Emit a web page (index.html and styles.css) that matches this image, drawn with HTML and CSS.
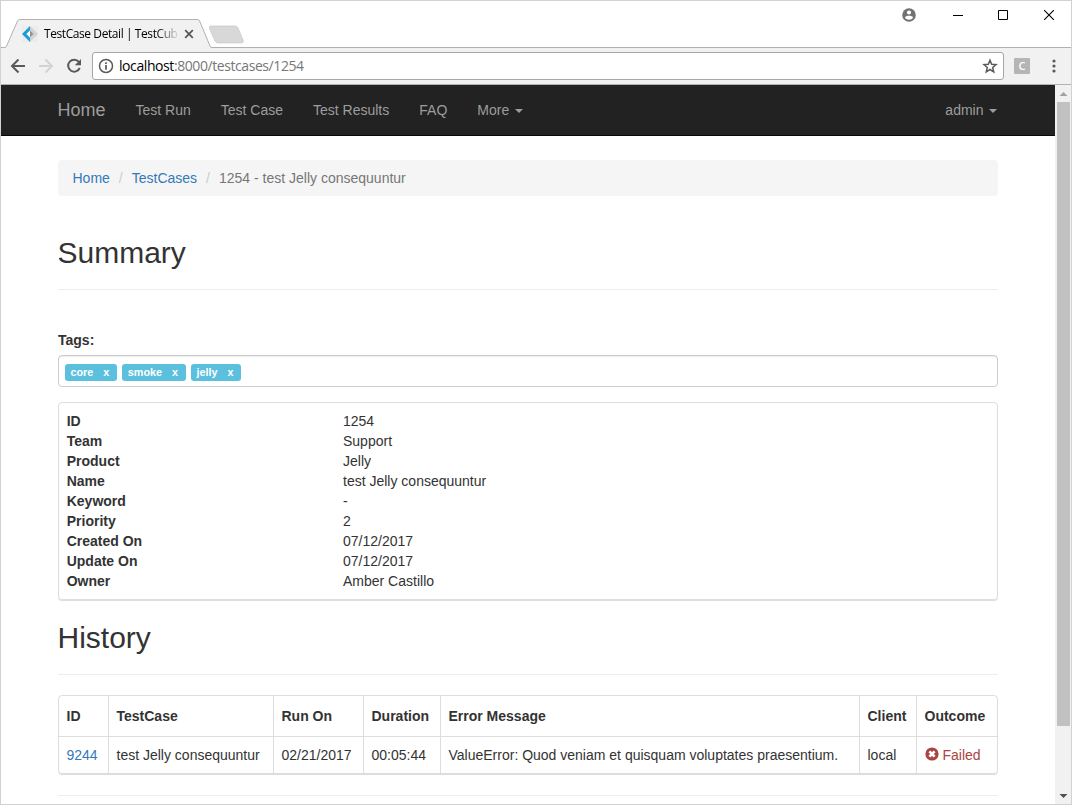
FILE: index.html
```html
<!DOCTYPE html>
<html lang="en">
<head>
<meta charset="utf-8">
<title>TestCase Detail | TestCube</title>
<link rel="stylesheet" href="styles.css">
</head>
<body>
<div class="window">
  <header class="titlebar">
    <div class="tab">
      <svg class="tab-shape" width="245" height="30" viewBox="0 0 245 30">
        <path d="M0 28.500H3.500Q5 28.500 5.600 27L16.500 2Q17.200.500 19 .500H196Q198 .500 198.600 2L209 27Q209.700 28.500 211 28.500H245V30H0Z" fill="#f1f1f1"/>
        <path d="M0 28.500H3.500Q5 28.500 5.600 27L16.500 2Q17.200.500 19 .500H196Q198 .500 198.600 2L209 27Q209.700 28.500 211 28.500H245" fill="none" stroke="#b1b1b1"/>
        <path d="M211 29V30H245V28.900Z" fill="#f1f1f1"/>
        <path d="M209.500 7H234Q236 7 237 9L242 21Q243 24 240.500 24H217Q215 24 214 22L208.500 9.500Q207.800 7 209.500 7Z" fill="#d8d8d8" stroke="#c9c9c9" stroke-width=".8"/>
        <path d="M211.500 28V24.800H245V28Z" fill="#fff"/>
      </svg>
      <div class="tab-content">
        <svg width="16" height="16" viewBox="0 0 16 16">
          <path d="M0 0H16V16H0Z" fill="#ececec"/>
          <path d="M8 0L0 8l8 8v-4.500L4.500 8 8 4.500Z" fill="#189fdb"/>
          <path d="M8 0l8 8-8 8v-4.500L11.500 8 8 4.500Z" fill="#d2d2d2"/>
          <path d="M8 4.500L11.500 8 8 11.500Z" fill="#929292"/>
          <path d="M8 4.500L4.500 8 8 11.500Z" fill="#fff"/>
        </svg>
        <span class="tab-title">TestCase Detail | TestCub</span>
        <svg width="10" height="10" viewBox="0 0 10 10"><path d="M1.200 1.200l7.600 7.600M8.800 1.200L1.200 8.800" stroke="#555" stroke-width="1.700"/></svg>
      </div>
    </div>
    <div class="controls">
      <svg width="14" height="14" viewBox="0 0 14 14"><circle cx="7" cy="7" r="6.800" fill="#727272"/><circle cx="7" cy="4.500" r="2.100" fill="#fff"/><path d="M2.900 9.500C3.500 7.300 10.500 7.300 11.100 9.500 9.500 12.400 4.500 12.400 2.900 9.500Z" fill="#fff"/></svg>
      <svg class="minimize" width="10" height="10" viewBox="0 0 10 10"><path d="M0 5.500H10" stroke="#000"/></svg>
      <svg class="maximize" width="10" height="10" viewBox="0 0 10 10"><path d="M.500.500H9.500V9.500H.500Z" fill="none" stroke="#000"/></svg>
      <svg class="close" width="10" height="10" viewBox="0 0 10 10"><path d="M0 0L10 10M10 0L0 10" stroke="#000" stroke-width="1.100"/></svg>
    </div>
  </header>

  <div class="toolbar">
    <svg width="16" height="16" viewBox="0 0 16 16"><path d="M15 8H2.500M8.500 1.500L2 8l6.500 6.500" fill="none" stroke="#5a5a5a" stroke-width="2"/></svg>
    <svg class="forward" width="16" height="16" viewBox="0 0 16 16"><path d="M1 8H13.500M7.500 1.500L14 8l-6.500 6.500" fill="none" stroke="#d3d3d3" stroke-width="2"/></svg>
    <svg class="reload" width="16" height="16" viewBox="0 0 16 16"><path d="M12.900 4A6 6 0 1 0 13.700 10" fill="none" stroke="#5a5a5a" stroke-width="2"/><path d="M15 1v6.200H8.800Z" fill="#5a5a5a"/></svg>
    <div class="address">
      <svg width="16" height="16" viewBox="0 0 14 14"><circle cx="7" cy="7" r="5.700" fill="none" stroke="#5a5a5a" stroke-width="1.300"/><path d="M7 6.200v4M7 3.700v1.500" stroke="#5a5a5a" stroke-width="1.500"/></svg>
      <span class="url"><span class="host">localhost</span>:8000/testcases/1254</span>
      <svg class="star" width="16" height="16" viewBox="0 0 16 16"><path d="M8 2.200l1.700 4 4.300.400-3.300 2.900 1 4.300L8 11.500l-3.700 2.300 1-4.300L2 6.600l4.300-.400Z" fill="none" stroke="#5a5a5a" stroke-width="1.500"/></svg>
    </div>
    <span class="extension">C</span>
    <svg class="menu" width="4" height="14" viewBox="0 0 4 14"><g fill="#5a5a5a"><circle cx="2" cy="2" r="1.600"/><circle cx="2" cy="7" r="1.600"/><circle cx="2" cy="12" r="1.600"/></g></svg>
  </div>

  <div class="viewport">
    <div class="page">
      <nav class="navbar">
        <a class="brand">Home</a>
        <a>Test Run</a>
        <a>Test Case</a>
        <a>Test Results</a>
        <a>FAQ</a>
        <a>More<i class="caret"></i></a>
        <a class="user">admin<i class="caret"></i></a>
      </nav>
      <main class="container">
        <div class="breadcrumb">
          <a>Home</a><span class="slash">/</span><a>TestCases</a><span class="slash">/</span><span>1254 - test Jelly consequuntur</span>
        </div>
        <h2 class="summary-title">Summary</h2>
        <div class="tags-label">Tags:</div>
        <div class="tags">
          <span class="tag">core<b>x</b></span>
          <span class="tag">smoke<b>x</b></span>
          <span class="tag">jelly<b>x</b></span>
        </div>
        <dl class="panel details">
          <dt>ID</dt><dd>1254</dd>
          <dt>Team</dt><dd>Support</dd>
          <dt>Product</dt><dd>Jelly</dd>
          <dt>Name</dt><dd>test Jelly consequuntur</dd>
          <dt>Keyword</dt><dd>-</dd>
          <dt>Priority</dt><dd>2</dd>
          <dt>Created On</dt><dd>07/12/2017</dd>
          <dt>Update On</dt><dd>07/12/2017</dd>
          <dt>Owner</dt><dd>Amber Castillo</dd>
        </dl>
        <h2 class="history-title">History</h2>
        <div class="panel history">
          <table>
            <colgroup><col class="c-id"><col class="c-case"><col class="c-run"><col class="c-duration"><col class="c-error"><col class="c-client"><col class="c-outcome"></colgroup>
            <thead>
              <tr><th>ID</th><th>TestCase</th><th>Run On</th><th>Duration</th><th>Error Message</th><th>Client</th><th>Outcome</th></tr>
            </thead>
            <tbody>
              <tr>
                <td><a>9244</a></td><td>test Jelly consequuntur</td><td>02/21/2017</td><td>00:05:44</td><td>ValueError: Quod veniam et quisquam voluptates praesentium.</td><td>local</td>
                <td><span class="failed"><svg width="14" height="16" viewBox="0 0 14 16"><circle cx="7" cy="7" r="6.600" fill="#a94442"/><path d="M4.400 4.400l5.200 5.200M9.600 4.400L4.400 9.600" stroke="#fff" stroke-width="2.700"/></svg>Failed</span></td>
              </tr>
            </tbody>
          </table>
        </div>
        <hr>
      </main>
    </div>
    <div class="scrollbar">
      <svg width="16" height="17" viewBox="0 0 16 17"><path d="M4.500 11L8.500 7l4 4Z" fill="#a3a3a3"/></svg>
      <div class="thumb"></div>
      <svg class="down" width="16" height="17" viewBox="0 0 16 17"><path d="M4.500 7L8.500 11l4-4Z" fill="#505050"/></svg>
    </div>
  </div>
</div>
</body>
</html>
```
FILE: styles.css
```css
* { box-sizing: border-box; }
body {
  margin: 0;
  font: 14px/20px "Liberation Sans", Arial, sans-serif;
  color: #333;
  background: #fff;
}
svg { display: block; flex: none; }
a { color: #337ab7; }
.window {
  display: flex;
  flex-direction: column;
  height: 805px;
  border: 1px solid #d2d2d2;
  overflow: hidden;
}

/* Browser frame */
.titlebar {
  display: flex;
  justify-content: space-between;
  height: 47px;
  border-bottom: 1px solid #b1b1b1;
}
.tab { display: grid; margin: 18px 0 -1px; height: 29px; z-index: 1; }
.tab-shape, .tab-content { grid-area: 1 / 1; }
.tab-content {
  display: flex;
  align-items: center;
  height: 28px;
  padding: 1px 0 0 21px;
  font: 12px/16px "Open Sans", "Noto Sans", sans-serif;
  color: #000;
}
.tab-title {
  width: 134px;
  margin: 0 6px;
  white-space: nowrap;
  letter-spacing: -0.42px;
  -webkit-mask-image: linear-gradient(90deg, #000 112px, transparent 136px);
  mask-image: linear-gradient(90deg, #000 112px, transparent 136px);
}
.controls { display: flex; padding: 7px 17px 0 0; }
.minimize { margin: 2px 0 0 37px; }
.maximize, .close { margin: 2px 0 0 35px; }
.close { margin-left: 36px; }
.toolbar {
  display: flex;
  align-items: center;
  height: 37px;
  padding: 0 15px 0 9px;
  background: #f1f1f1;
  border-bottom: 1px solid #b1b1b1;
}
.forward { margin-left: 12px; }
.reload { margin-left: 12px; }
.address {
  display: flex;
  align-items: center;
  width: 912px;
  height: 28px;
  margin-left: 10px;
  padding: 0 5px;
  border: 1px solid #a6a6a6;
  border-radius: 3px;
  background: #fff;
}
.url {
  margin-left: 5px;
  font: 14px/20px "Open Sans", "Noto Sans", sans-serif;
  letter-spacing: -0.42px;
  color: #777;
}
.host { color: #000; }
.star { margin-left: auto; }
.extension {
  width: 16px;
  height: 16px;
  margin-left: 10px;
  border-radius: 1px;
  background: #b5b5b5;
  color: #fff;
  font: 600 11px/16px "Open Sans", sans-serif;
  text-align: center;
}
.menu { margin-left: auto; }
.viewport { display: flex; flex: 1; min-height: 0; }
.page { flex: 1; overflow: hidden; }
.scrollbar {
  display: flex;
  flex-direction: column;
  width: 16px;
  background: #f1f1f1;
}
.thumb { width: 13px; height: 624px; margin-left: 2px; background: #c1c1c1; }
.down { margin-top: auto; }

/* Navigation */
.navbar {
  display: flex;
  gap: 30px;
  height: 51px;
  padding: 0 58px 0 56.5px;
  background: #222;
  border-bottom: 1px solid #080808;
  line-height: 50px;
}
.navbar a { color: #9d9d9d; }
.navbar .brand { font-size: 18px; }
.navbar .user { margin-left: auto; }
.caret {
  display: inline-block;
  margin-left: 5.5px;
  border: 4px solid transparent;
  border-top-color: currentColor;
  border-bottom: 0;
  vertical-align: middle;
}

/* Content */
.container { width: 940px; margin: 24px 0 0 57px; }
.breadcrumb {
  height: 36px;
  padding: 8px 14.5px;
  border-radius: 4px;
  background: #f5f5f5;
  color: #777;
}
.slash { padding: 0 9px; color: #ccc; }
h2 {
  height: 54px;
  margin: 0;
  border-bottom: 1px solid #eee;
  font-size: 30px;
  font-weight: 500;
  line-height: 33px;
  text-indent: -0.5px;
}
.summary-title { margin: 40px 0; }
.history-title { margin: 21px 0 20px; }
.tags-label { font-weight: 700; }
.tags {
  display: flex;
  gap: 5.5px;
  height: 32px;
  margin: 5px 0 15px;
  padding: 8px 6px;
  border: 1px solid #ccc;
  border-radius: 4px;
  box-shadow: inset 0 1px 1px rgba(0, 0, 0, .075);
}
.tag {
  height: 17px;
  padding: 0 7.5px 0 5.5px;
  border-radius: 3px;
  background: #5bc0de;
  color: #fff;
  font-size: 10.8px;
  font-weight: 700;
  line-height: 17px;
}
.tag b { margin-left: 10px; }
.panel {
  margin: 0;
  border: 1px solid #ddd;
  border-radius: 4px;
  box-shadow: 0 1px 0 #ddd;
}
.details {
  display: grid;
  grid-template-columns: 276px 1fr;
  padding: 8px;
}
dt { font-weight: 700; text-indent: -0.3px; }
dd { margin: 0; }
table { width: 100%; table-layout: fixed; border-spacing: 0; }
th, td {
  padding: 8px 0 8px 7.5px;
  border-left: 1px solid #ddd;
  text-align: left;
  white-space: nowrap;
}
th { height: 41px; border-bottom: 1px solid #ddd; }
td { height: 36px; }
th:first-child, td:first-child { border-left: 0; }
.c-id { width: 49px; }
.c-case { width: 165px; }
.c-run { width: 90px; }
.c-duration { width: 77px; }
.c-error { width: 419px; }
.c-client { width: 57px; }
.failed { display: flex; align-items: center; gap: 4px; color: #a94442; }
hr { margin: 21px 0; border: 0; border-top: 1px solid #eee; }
```
